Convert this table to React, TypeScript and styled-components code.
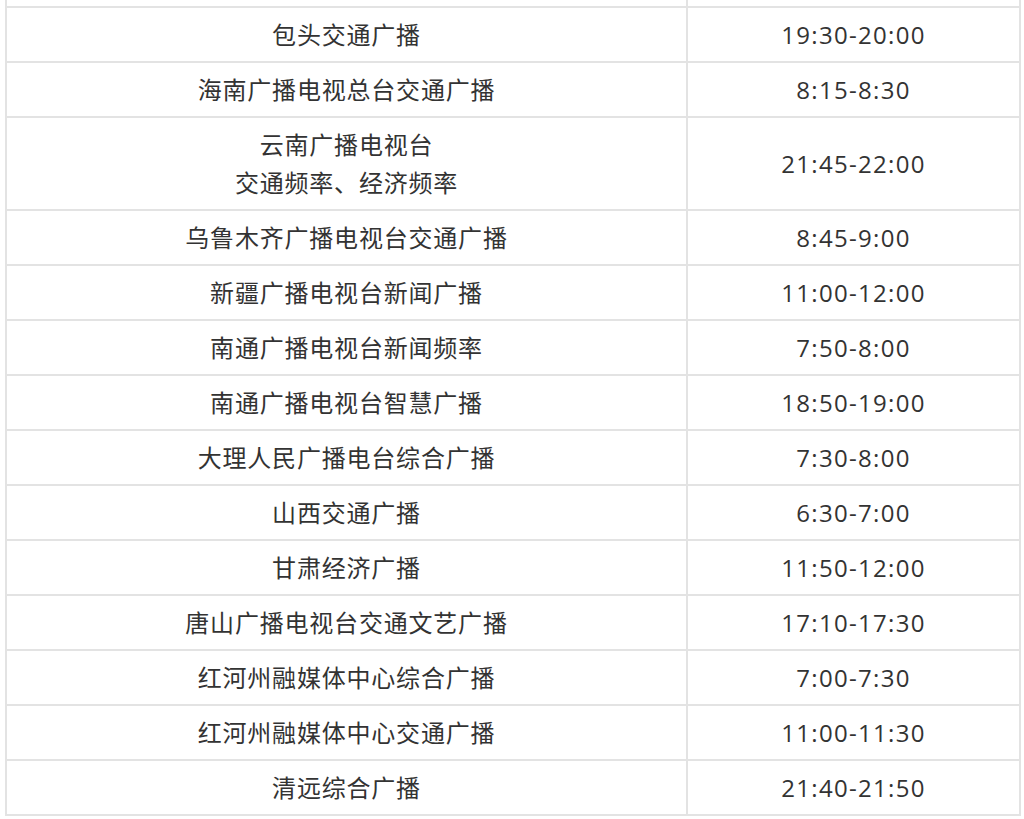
import React from "react";
import styled, { createGlobalStyle } from "styled-components";

const GlobalStyle = createGlobalStyle`
  html, body {
    margin: 0;
    padding: 0;
    background: #ffffff;
  }
  body {
    overflow: hidden;
  }
`;

/* --- Styled Components --- */

const Page = styled.div`
  height: 819px;
  overflow: hidden;
  padding-left: 5px;
  box-sizing: border-box;
`;

const Table = styled.table`
  width: 1016px;
  margin-top: -49px;
  border-collapse: collapse;
  table-layout: fixed;
  font-family: "Open Sans", "Noto Sans CJK SC", sans-serif;
  color: #333333;
`;

const Row = styled.tr``;

const Cell = styled.td<{ $wide?: boolean }>`
  width: ${(p) => (p.$wide ? "659px" : "auto")};
  border: 2px solid #e3e3e3;
  padding: 8px 10px;
  text-align: center;
  vertical-align: middle;
  font-size: 24px;
  line-height: 37px;
  letter-spacing: ${(p) => (p.$wide ? "0.8px" : "1.3px")};
  white-space: nowrap;
`;

const Line = styled.div<{ $multi?: boolean }>`
  line-height: ${(p) => (p.$multi ? "37.5px" : "37px")};
`;

/* --- Data --- */

type Item = { name: string[]; time: string };

const items: Item[] = [
  { name: ["包头交通广播"], time: "19:30-20:00" },
  { name: ["海南广播电视总台交通广播"], time: "8:15-8:30" },
  { name: ["云南广播电视台", "交通频率、经济频率"], time: "21:45-22:00" },
  { name: ["乌鲁木齐广播电视台交通广播"], time: "8:45-9:00" },
  { name: ["新疆广播电视台新闻广播"], time: "11:00-12:00" },
  { name: ["南通广播电视台新闻频率"], time: "7:50-8:00" },
  { name: ["南通广播电视台智慧广播"], time: "18:50-19:00" },
  { name: ["大理人民广播电台综合广播"], time: "7:30-8:00" },
  { name: ["山西交通广播"], time: "6:30-7:00" },
  { name: ["甘肃经济广播"], time: "11:50-12:00" },
  { name: ["唐山广播电视台交通文艺广播"], time: "17:10-17:30" },
  { name: ["红河州融媒体中心综合广播"], time: "7:00-7:30" },
  { name: ["红河州融媒体中心交通广播"], time: "11:00-11:30" },
  { name: ["清远综合广播"], time: "21:40-21:50" },
];

/* --- Component --- */

const App: React.FC = () => {
  return (
    <>
      <GlobalStyle />
      <Page>
        <Table>
          <tbody>
            {/* row above the fold, only its bottom edge shows */}
            <Row>
              <Cell $wide>&nbsp;</Cell>
              <Cell>&nbsp;</Cell>
            </Row>
            {items.map((item) => (
              <Row key={item.name.join("")}>
                <Cell $wide>
                  {item.name.map((line) => (
                    <Line key={line} $multi={item.name.length > 1}>
                      {line}
                    </Line>
                  ))}
                </Cell>
                <Cell>{item.time}</Cell>
              </Row>
            ))}
          </tbody>
        </Table>
      </Page>
    </>
  );
};

export default App;
